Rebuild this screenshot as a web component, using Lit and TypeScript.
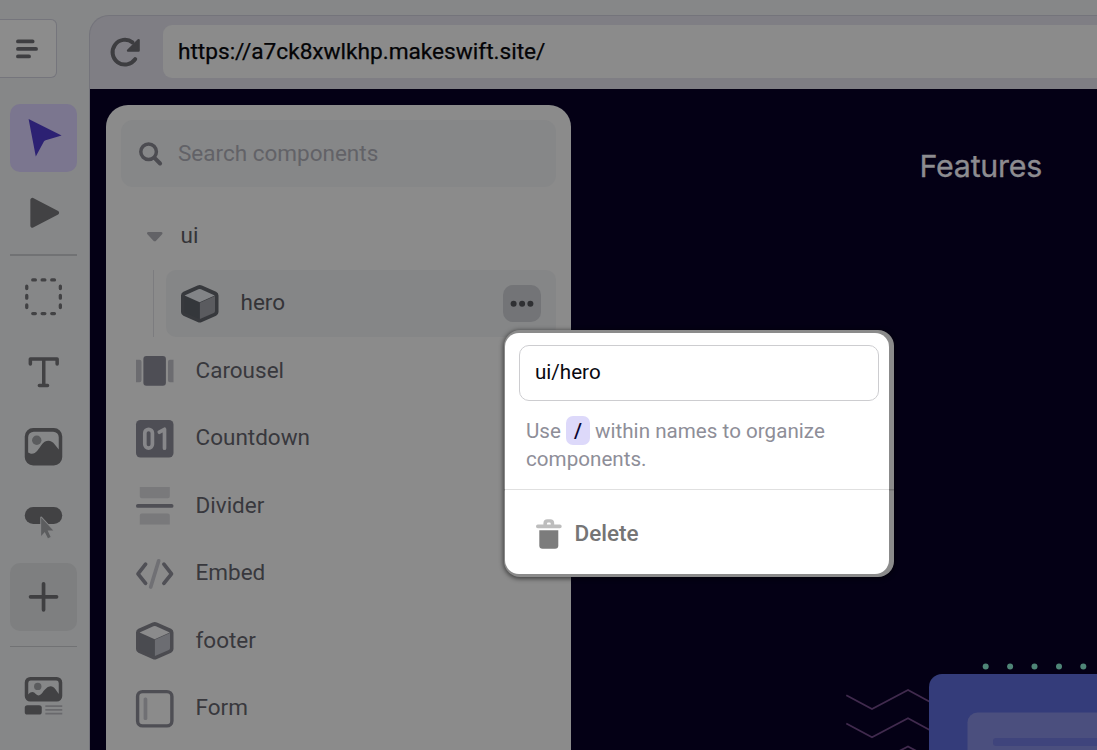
import { LitElement, html, svg, css } from "lit";
import { customElement, property } from "lit/decorators.js";

const cube = (dark: string, left: string, mid: string, top: string) => svg`
  <path fill=${dark} d="M16.6.5a4.6 4.6 0 0 1 4.3 0L35.1 6.8A4 4 0 0 1 37.5 10.4V27a4 4 0 0 1-2.4 3.7L20.9 37a4.6 4.6 0 0 1-4.3 0L2.4 30.7A4 4 0 0 1 0 27V10.4A4 4 0 0 1 2.4 6.8Z"/>
  <path fill=${left} d="M3.5 11.2 18.6 18V34L3.5 27.5Z"/>
  <path fill=${top} d="M3.6 10.4 17.4 4.2a3.2 3.2 0 0 1 2.6 0l13.8 6.2L18.7 17.2Z"/>
  <path fill=${mid} d="M18.9 17.8 34 11v15a2 2 0 0 1-1.2 1.9L18.9 34Z"/>`;

const icons: Record<string, unknown> = {
  cursor: svg`<path fill="#2c2173" d="M4.2.1 37.2 16.5 21.2 21.2a3 3 0 0 0-1.7 1.3L11.4 37.4Z"/>`,
  play: svg`<path fill="#424244" d="M5.6 5.8a1.9 1.9 0 0 1 2.8-1.7l25 13a1.9 1.9 0 0 1 0 3.3l-25 13.1a1.9 1.9 0 0 1-2.8-1.7Z"/>`,
  box: svg`<g fill="none" stroke="#424244" stroke-width="3.3" stroke-linecap="round">
    <path d="M8 1.9h2.6M17.4 1.9h2.7M27 1.9h2.7M8 35.6h2.6M17.4 35.6h2.7M27 35.6h2.7"/>
    <path d="M2 10.6V8.2M2 20.2v-2.8M2 29.6v-2.6M35.6 10.6V8.2M35.6 20.2v-2.8M35.6 29.6v-2.6"/></g>`,
  text: svg`<path fill="none" stroke="#424244" stroke-width="3.5" stroke-linecap="round" stroke-linejoin="round" d="M5.6 11V5.9H32.4V11M19 6v26.4M14.6 32.4h8.2"/>`,
  image: svg`<path fill="#424244" fill-rule="evenodd" d="M8.5 0H29a8.5 8.5 0 0 1 8.5 8.5V29a8.5 8.5 0 0 1-8.5 8.5H8.5A8.5 8.5 0 0 1 0 29V8.5A8.5 8.5 0 0 1 8.5 0ZM9 3.7A5.6 5.6 0 0 0 3.4 9.3V24.5C10 28.5 13 22 16.5 17.2 20.5 11.7 26 11.2 30 16.5L34 21.5V9.3A5.6 5.6 0 0 0 28.4 3.7Z"/><circle cx="12" cy="12.2" r="4.7" fill="#5b5c5e"/>`,
  button: svg`<rect y="4" width="37.5" height="17" rx="8.5" fill="#424244"/><path fill="#5c5d5f" stroke="#868788" stroke-width="1.8" paint-order="stroke" stroke-linejoin="round" d="M16.4 14.4v18.5L20 29l3.2 6.2 2.7-1.3-3-6.3h5.6Z"/>`,
  plus: svg`<path stroke="#3f3f41" stroke-width="3.7" stroke-linecap="round" d="M18.8 5.8v26M5.8 18.8h26"/>`,
  blocks: svg`<path fill="#424244" fill-rule="evenodd" d="M5.5 0H32a5.5 5.5 0 0 1 5.5 5.5V19a5.5 5.5 0 0 1-5.5 5.5H5.5A5.5 5.5 0 0 1 0 19V5.5A5.5 5.5 0 0 1 5.5 0ZM6 3.6A2.5 2.5 0 0 0 3.5 6v11.5C6.5 14 9 14.5 11 17c2 2 4 2 6.5-1 4-6 9-9.5 13-4l3.5 5V6A2.5 2.5 0 0 0 31.5 3.6Z"/><circle cx="13" cy="9.4" r="3.7" fill="#5b5c5e"/><rect y="28.2" width="17" height="9.3" rx="2.6" fill="#424244"/><path stroke="#69696c" stroke-width="1.8" d="M20.6 29.1h16.9M20.6 32.9h16.9M20.6 36.6h16.9"/>`,
  cubeDark: cube("#37393d", "#34373b", "#5a5b5f", "#828487"),
  cube: cube("#4b4b50", "#4a4b50", "#6c6d72", "#8b8b8c"),
  carousel: svg`<rect x="7.4" y="4" width="22.5" height="29.8" rx="3" fill="#4e4e55"/><path fill="#6c6c70" d="M0 7.7h3.5a2 2 0 0 1 2 2v18.6a2 2 0 0 1-2 2H0ZM37.5 7.7H34a2 2 0 0 0-2 2v18.6a2 2 0 0 0 2 2h3.5Z"/>`,
  countdown: svg`<rect width="37.5" height="37.5" rx="4.5" fill="#4e4e55"/><g fill="none" stroke="#87878a" stroke-width="3.7" stroke-linecap="round" stroke-linejoin="round"><rect x="8.8" y="9.3" width="7.6" height="18.8" rx="3.8"/><path d="M23.3 12.2 28.5 9.3V28.2"/></g>`,
  divider: svg`<path fill="#79797b" d="M3.8 0H33.8V9.2a2 2 0 0 1-2 2H5.8a2 2 0 0 1-2-2ZM3.8 37.5H33.8V28.4a2 2 0 0 0-2-2H5.8a2 2 0 0 0-2 2Z"/><rect y="16.9" width="37.5" height="3.9" rx="1.9" fill="#4f4f55"/>`,
  embed: svg`<g fill="none" stroke-width="3.7" stroke-linecap="round" stroke-linejoin="round"><path stroke="#707074" d="M22.7 5.8 14.7 32"/><path stroke="#505056" d="M9.6 9.2 2 18.8 9.6 28.4M27.9 9.2 35.5 18.8 27.9 28.4"/></g>`,
  form: svg`<rect x="1.6" y="1.6" width="34.3" height="34.3" rx="5" fill="none" stroke="#4e4e54" stroke-width="3.4"/><rect x="7.6" y="7.5" width="3.7" height="22.5" rx="1.6" fill="#707074"/>`,
  reload: svg`<path fill="none" stroke="#3d3d40" stroke-width="4" stroke-linecap="round" d="M30.2 26.2A12.4 12.4 0 1 1 27.5 9.3"/><path fill="#3d3d40" stroke="#3d3d40" stroke-width="2.4" stroke-linejoin="round" d="M33.6 7.2V17.5H23Z"/>`,
  lines: svg`<path stroke="#3e3e41" stroke-width="3.9" stroke-linecap="round" d="M10 11.4h14.6M10 18.9h18M10 26.4H21"/>`,
  search: svg`<circle cx="16.6" cy="16.7" r="7.8" fill="none" stroke="#4c4c51" stroke-width="3.5"/><path stroke="#4c4c51" stroke-width="4" stroke-linecap="round" d="m22.5 22.8 5.6 5.7"/>`,
  caret: svg`<path fill="#626266" d="M12.4 15h12.7c1.3 0 1.9 1.3 1 2.3l-5.8 6.2a2.1 2.1 0 0 1-3.1 0l-5.800-6.200c-.9-1-.3-2.300 1-2.300Z"/>`,
  dots: svg`<g fill="#2f3033"><circle cx="10.6" cy="18.7" r="3"/><circle cx="19.1" cy="18.7" r="3"/><circle cx="27.4" cy="18.7" r="3"/></g>`,
  trash: svg`<path fill="#7c7c7c" d="M9.3 15.2h19v15.3a3.3 3.3 0 0 1-3.3 3.3H12.6a3.3 3.3 0 0 1-3.3-3.3Z"/><path fill="#bdbdbd" fill-rule="evenodd" d="M13.4 9.6V8.2a4 4 0 0 1 4-4h2.8a4 4 0 0 1 4 4v1.4h5.7a1.8 1.8 0 0 1 0 3.6H7.8a1.8 1.8 0 0 1 0-3.6ZM16.9 9.6h3.9V8.9a1.4 1.4 0 0 0-1.4-1.4h-1.1a1.4 1.4 0 0 0-1.4 1.4Z"/>`,
};

@customElement("ui-icon")
class UiIcon extends LitElement {
  @property() name = "";
  static styles = css`
    :host { display: block; width: 37.5px; height: 37.5px; flex: none; }
    svg { display: block; width: 100%; height: 100%; overflow: visible; }
  `;
  render() {
    return html`<svg viewBox="0 0 37.5 37.5">${icons[this.name]}</svg>`;
  }
}

@customElement("tool-rail")
class ToolRail extends LitElement {
  static styles = css`
    :host { display: flex; flex-direction: column; width: 89px; flex: none; box-sizing: border-box; padding-top: 19px; }
    .menu { box-sizing: border-box; width: 57px; height: 59px; border: 1px solid #75757c; border-left: 0; border-radius: 0 6px 6px 0; background: #8c8c8c; display: flex; align-items: center; padding-left: 8.5px; margin-bottom: 26px; }
    .menu ui-icon { margin-left: -0.2px; }
    .tools { display: flex; flex-direction: column; gap: 7.5px; padding-left: 9.75px; width: 67.5px; }
    .tool { height: 67.5px; border-radius: 10px; display: grid; place-items: center; }
    .tool ui-icon { transform: translateX(-0.25px); }
    .active { background: #7b768f; }
    .active ui-icon { transform: translateX(-0.6px); }
    .add { background: #7e7f80; }
    .rule { height: 1.5px; background: #717274; }
    .rule.last { margin: 7.5px 0; }
  `;
  tool(name: string, state = "") {
    return html`<div class="tool ${state}"><ui-icon name=${name}></ui-icon></div>`;
  }
  render() {
    return html`
      <div class="menu"><ui-icon name="lines"></ui-icon></div>
      <div class="tools">
        ${this.tool("cursor", "active")} ${this.tool("play")}
        <div class="rule"></div>
        ${["box", "text", "image", "button"].map((n) => this.tool(n))}
        ${this.tool("plus", "add")}
        <div class="rule last"></div>
        ${this.tool("blocks")}
      </div>`;
  }
}

@customElement("component-panel")
class ComponentPanel extends LitElement {
  static styles = css`
    :host { display: block; box-sizing: border-box; width: 465px; height: 700px; padding: 15px 15px 0; border-radius: 22px; background: #8b8b8b; color: #38383d; font-size: 22.5px; }
    .search { display: flex; align-items: center; height: 67.5px; border-radius: 12px; background: #868788; padding-left: 11px; gap: 9px; color: #626267; margin-bottom: 15px; }
    .search span { margin-bottom: 1px; }
    .row { display: flex; align-items: center; height: 67.5px; padding-left: 15px; gap: 22.5px; }
    .row span { margin-bottom: 2px; }
    .group { gap: 7.5px; }
    .group span { color: #343438; }
    .nested { display: flex; padding-left: 32px; gap: 12px; }
    .nested .line { width: 1.5px; background: #7c7c7f; }
    .nested .row { flex: 1; border-radius: 10px; background: #858687; padding-right: 15px; gap: 22px; }
    .nested .row span { flex: 1; color: #343438; }
    .more { width: 37.5px; height: 37.5px; border-radius: 10px; background: #737477; }
  `;
  render() {
    const rows = [
      ["carousel", "Carousel"],
      ["countdown", "Countdown"],
      ["divider", "Divider"],
      ["embed", "Embed"],
      ["cube", "footer"],
      ["form", "Form"],
    ];
    return html`
      <div class="search"><ui-icon name="search"></ui-icon><span>Search components</span></div>
      <div class="row group"><ui-icon name="caret"></ui-icon><span>ui</span></div>
      <div class="nested">
        <div class="line"></div>
        <div class="row"><ui-icon name="cubeDark"></ui-icon><span>hero</span><div class="more"><ui-icon name="dots"></ui-icon></div></div>
      </div>
      ${rows.map(([icon, label]) => html`<div class="row"><ui-icon name=${icon}></ui-icon><span>${label}</span></div>`)}`;
  }
}

@customElement("rename-menu")
class RenameMenu extends LitElement {
  static styles = css`
    :host { display: block; box-sizing: border-box; padding: 3px 4.5px 3px 1px; border-radius: 16px; background: linear-gradient(#727272, #727272) 0 159px / 100% 1.5px no-repeat #8b8b8b; box-shadow: 0 1px 4px 1px rgba(0, 0, 0, 0.5); }
    .card { height: 240.5px; box-sizing: border-box; border-radius: 14px; background: #fff; padding-top: 12px; overflow: hidden; }
    .field { margin: 0 10.5px 0 13.5px; height: 56px; box-sizing: border-box; border: 1.5px solid #cdcdd0; border-radius: 10px; display: flex; align-items: center; padding: 0 15px 1.5px 15.5px; font-size: 20.6px; color: #080810; }
    .hint { margin: 15px 0 0 21px; height: 72.5px; font-size: 20.6px; letter-spacing: 0.02px; line-height: 29px; color: #8e8e98; }
    .line { display: flex; gap: 5px; height: 28.5px; }
    .line span { padding-top: 0.6px; }
    .line .key { box-sizing: border-box; width: 24px; height: 29px; text-align: center; border-radius: 7px; background: #ddd9fa; color: #0a0430; font-weight: 500; }
    .delete { border-top: 1.5px solid #e0e0e0; height: 84px; display: flex; align-items: center; box-sizing: border-box; padding: 3.5px 0 0 24.5px; gap: 7.5px; font-size: 22.5px; font-weight: 500; color: #757575; }
    .delete ui-icon { margin-top: 2px; }
  `;
  render() {
    return html`<div class="card">
      <div class="field">ui/hero</div>
      <div class="hint">
        <div class="line"><span>Use</span><span class="key">/</span><span>within names to organize</span></div>
        <div class="line"><span>components.</span></div>
      </div>
      <div class="delete"><ui-icon name="trash"></ui-icon>Delete</div>
    </div>`;
  }
}

@customElement("app-root")
class AppRoot extends LitElement {
  static styles = css`
    :host { display: flex; position: relative; width: 1097px; height: 750px; overflow: hidden; background: #868788; font-family: Roboto, "Liberation Sans", sans-serif; }
    .browser { flex: 1; min-width: 0; display: flex; flex-direction: column; margin-top: 15px; border: 1.5px solid #74747b; border-right: 0; border-bottom: 0; border-radius: 20px 0 0 0; background: #7f7e84; overflow: hidden; }
    .bar { display: flex; align-items: center; height: 73px; box-sizing: border-box; padding: 0 0 1.5px 14.5px; gap: 20.5px; flex: none; }
    .url { flex: 1; height: 53px; border-radius: 9px 0 0 9px; background: #8b8b8b; display: flex; align-items: center; padding: 0 0 0 15.5px; box-sizing: border-box; font-size: 22.7px; letter-spacing: -0.03px; color: #040406; -webkit-text-stroke: 0.25px #040406; }
    .site { flex: 1; min-height: 0; display: flex; align-items: flex-start; justify-content: space-between; background: #040015; position: relative; overflow: hidden; padding: 15.5px 55px 0 15.5px; }
    .nav { font-family: Inter, Roboto, sans-serif; font-size: 30.4px; letter-spacing: -0.25px; line-height: 40px; margin-top: 41px; color: #8d8c90; -webkit-text-stroke: 0.35px #8d8c90; }
    .art { position: absolute; right: 0; bottom: 0; width: 267px; height: 110px; }
    .menu { position: absolute; left: 504px; top: 330px; width: 389.5px; }
  `;
  render() {
    return html`
      <tool-rail></tool-rail>
      <div class="browser">
        <div class="bar"><ui-icon name="reload"></ui-icon><div class="url">https://a7ck8xwlkhp.makeswift.site/</div></div>
        <div class="site">
          <svg class="art" viewBox="0 0 267 110">
            <g fill="none" stroke="#412a4e" stroke-width="1.8">
              ${[55.3, 83.5, 111.7].map((y) => svg`<path d=${`M16.3 ${y}l25.7 13.7 36-19 24 13`} />`)}
            </g>
            <g fill="#4f8577">${[155.7, 180.1, 204.5, 229, 253.3].map((x) => svg`<circle cx=${x} cy="26.5" r="3" />`)}</g>
            <rect x="99" y="34" width="190" height="100" rx="13" fill="#343c7a" />
            <rect x="137.5" y="72.5" width="150" height="60" rx="10" fill="#4b4f7e" />
            <rect x="163" y="98" width="130" height="8" rx="3" fill="#3f447c" />
          </svg>
          <component-panel></component-panel>
          <div class="nav">Features</div>
        </div>
      </div>
      <rename-menu class="menu"></rename-menu>`;
  }
}
